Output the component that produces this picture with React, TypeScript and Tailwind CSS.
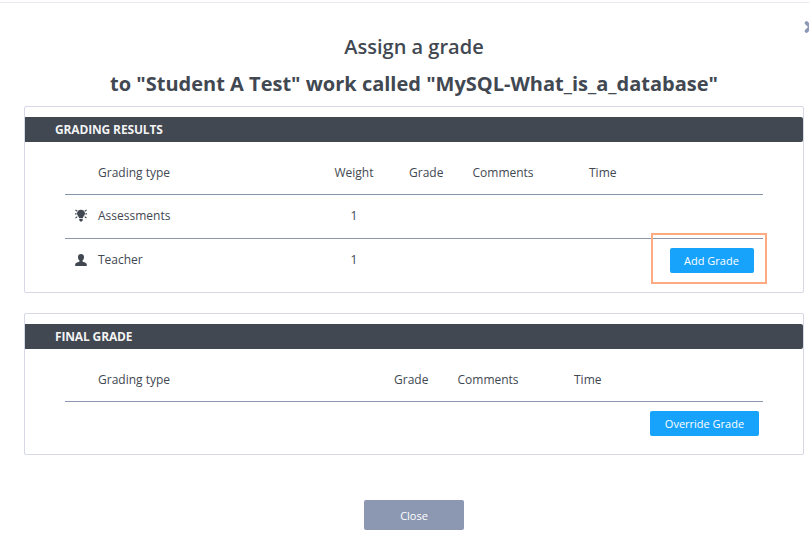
import type { ReactNode } from "react";

function Panel({ title, className, children }: { title: string; className: string; children: ReactNode }) {
  return (
    <section className={"rounded-xs border border-[#d6d8e6] pt-[10px] " + className}>
      <div className="h-[25px] rounded-r-xs bg-[#414852] pl-[30px] text-[12px] leading-[25px] font-bold tracking-[-0.15px] text-white/95">{title}</div>
      <div className="mx-10">{children}</div>
    </section>
  );
}

function Bulb() {
  return (
    <svg className="mb-[2px] ml-[10px]" width="12" height="13" viewBox="0 0 12 13" fill="#414852">
      <path d="M6 .8C3.600.8 2 2.400 2 4.600c0 2 1.700 2.800 2.100 4.400h3.800C8.300 7.400 10 6.600 10 4.600 10 2.400 8.400.8 6 .8zM4.300 9.700h3.400v1.500L6.900 12.500H5.100l-.8-1.300z" />
      <path d="M.4.9l1.800 1.400M11.600.9L9.800 2.300M0 4.900h1.600M12 4.900h-1.600M.5 9.100l1.800-1.500M11.500 9.100L9.700 7.600" stroke="#414852" strokeWidth="1.200" />
    </svg>
  );
}

function Person() {
  return (
    <svg className="mb-[2px] ml-[10px]" width="12" height="12" viewBox="0 0 12 12" fill="#414852">
      <path d="M6 0C4.100 0 3 1.200 3 3c0 1.600.6 2.900 1.500 3.600v.8C3.300 8.200.2 8.300.2 10.600V12h11.600v-1.400c0-2.300-3.100-2.400-4.300-3.200v-.8C8.400 5.900 9 4.600 9 3 9 1.200 7.900 0 6 0z" />
    </svg>
  );
}

const button = "flex items-center justify-center rounded-xs bg-[#17a2fc] pt-[2px] text-[11px] font-medium text-white";

export default function App() {
  return (
    <div className="relative h-[544px] w-[809px] overflow-hidden bg-white pt-[2px] font-['Open_Sans',sans-serif] text-[12px] text-[#414852]">
      <div className="h-px bg-[#e8eaf4]" />
      <svg className="absolute left-[804px] top-[21px]" width="12" height="12" viewBox="0 0 12 12" stroke="#8c98b5" strokeWidth="3.600" strokeLinecap="round"><path d="M2.500 2l8 8M10.500 2l-8 8" /></svg>
      <div className="ml-6 w-[780px]">
        <h1 className="pt-[30px] text-center text-[20px] leading-[28px] font-semibold">Assign a grade</h1>
        <h2 className="mt-[9px] h-[36px] text-center text-[20px] leading-[28px] font-bold">to "Student A Test" work called "MySQL-What_is_a_database"</h2>
        <Panel title="GRADING RESULTS" className="h-[187px]">
          <div className="grid h-[53px] grid-cols-[33px_236.500px_74.500px_63.500px_116.500px_1fr] items-center border-b border-[#8694ab] pt-[9px]">
            <span /><span>Grading type</span><span>Weight</span><span>Grade</span><span>Comments</span><span>Time</span>
          </div>
          <div className="grid h-[44px] grid-cols-[33px_252.500px_1fr] items-center border-b border-[#8c95aa] pb-px">
            <Bulb /><span>Assessments</span><span>1</span>
          </div>
          <div className="grid h-[44px] grid-cols-[33px_252.500px_1fr_116px] items-center">
            <Person /><span className="pb-[2px]">Teacher</span><span className="pb-[2px]">1</span>
            <div className="relative -top-[3px] left-1 -my-1 flex h-[51px] items-center justify-center border-2 border-[#ffaa80] pt-[4px] pl-[5px]">
              <button className={button + " h-[25px] w-[84px]"}>Add Grade</button>
            </div>
          </div>
        </Panel>
        <Panel title="FINAL GRADE" className="mt-5 h-[142px]">
          <div className="grid h-[53px] grid-cols-[33px_296px_63.500px_116.500px_1fr] items-center border-b border-[#8c95b0] pt-[9px]">
            <span /><span>Grading type</span><span>Grade</span><span>Comments</span><span>Time</span>
          </div>
          <div className="flex justify-end pt-[9px] pr-1">
            <button className={button + " h-[25px] w-[109px]"}>Override Grade</button>
          </div>
        </Panel>
        <button className="mx-auto mt-[45px] flex h-[30px] w-[100px] items-center justify-center rounded-xs bg-[#8c97b2] pt-[3px] text-[11px] font-medium text-white">Close</button>
      </div>
    </div>
  );
}
